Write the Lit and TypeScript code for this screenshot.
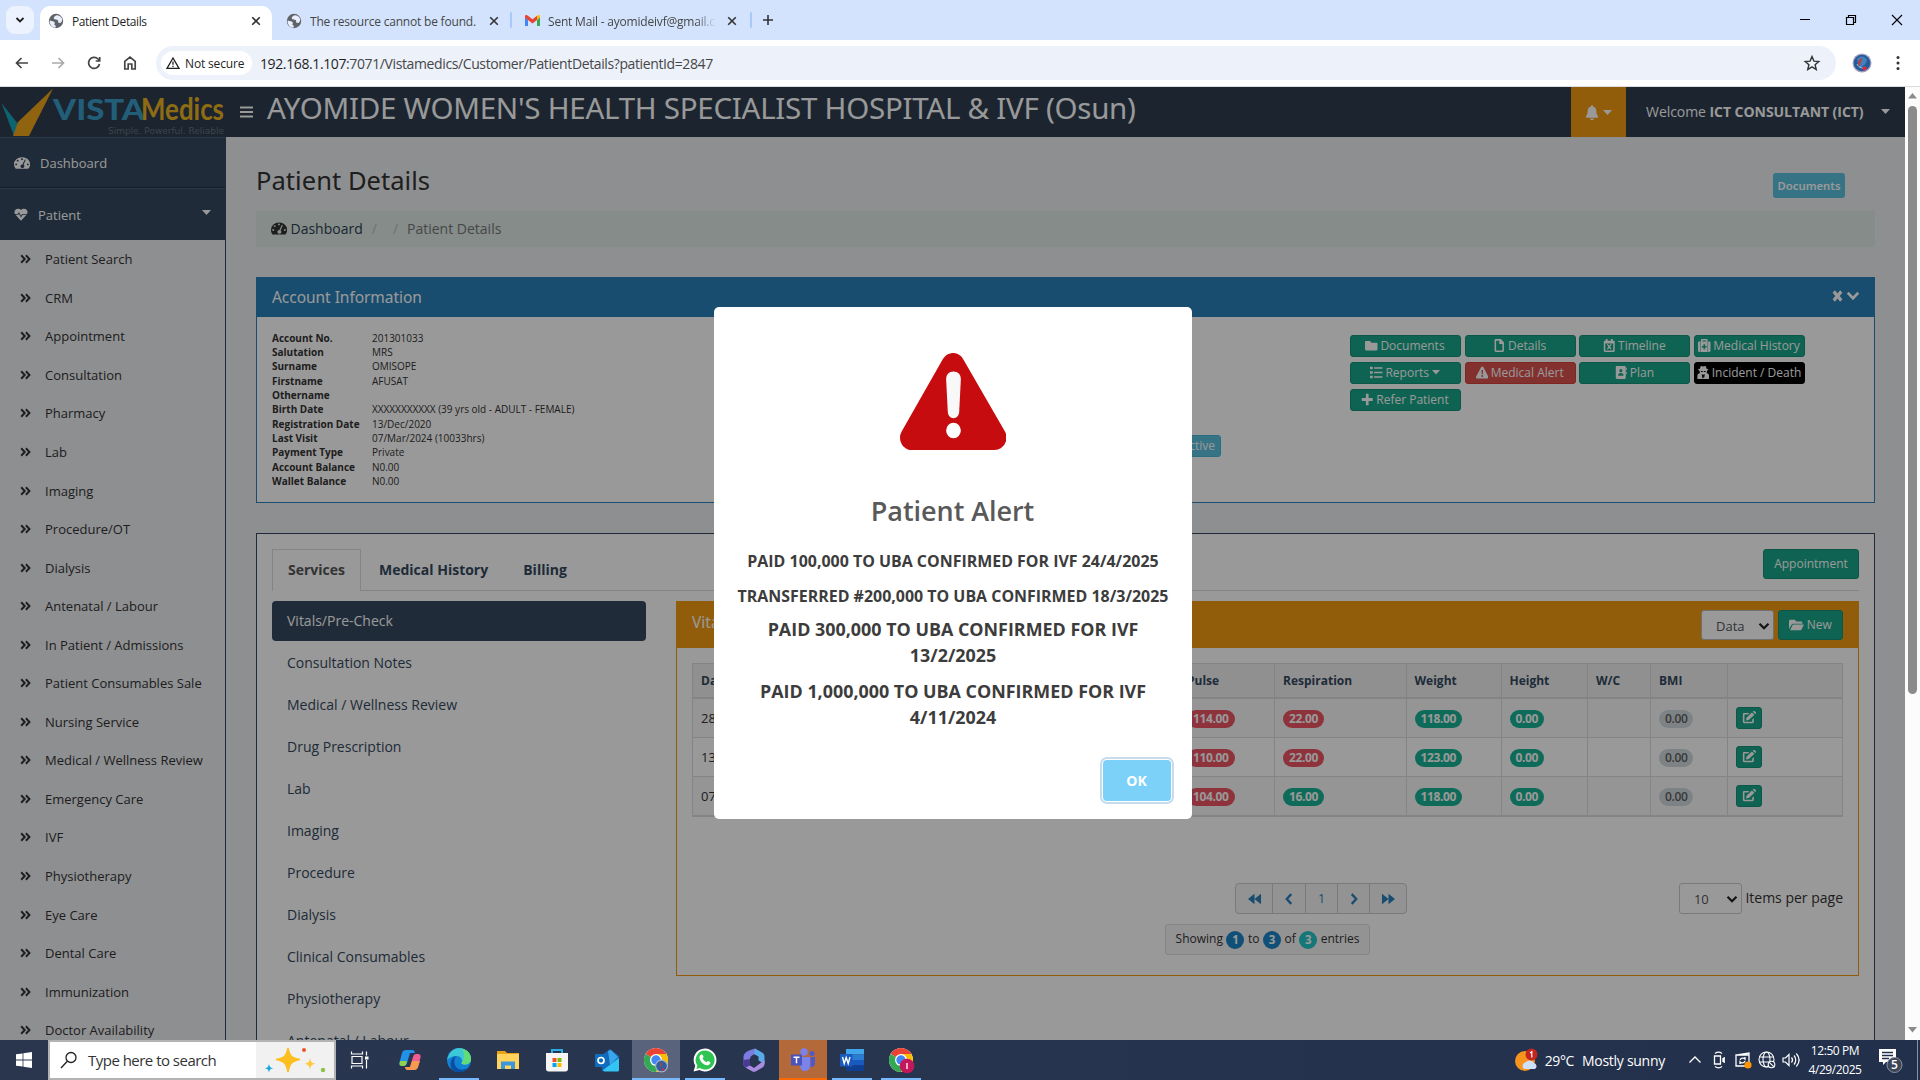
import { LitElement, html, css, svg } from "lit";
import { customElement } from "lit/decorators.js";
import { classMap } from "lit/directives/class-map.js";

const glyph = (body: unknown, w = 16, h = 16, vb = "0 0 16 16", cls = "") =>
  html`<svg class="ic ${cls}" width=${w} height=${h} viewBox=${vb} fill="currentColor" preserveAspectRatio="none">${body}</svg>`;

const dash = svg`<path fill-rule="evenodd" d="M8 1.500a8 8 0 0 0-8 8c0 1.700.5 3.200 1.300 4.500.2.300.4.500.8.500h11.800c.4 0 .6-.2.8-.5A8 8 0 0 0 8 1.500zM8 2.600a1 1 0 1 1 0 2 1 1 0 0 1 0-2zM3.700 4.400a1 1 0 1 1 0 2 1 1 0 0 1 0-2zM2.200 8.600a1 1 0 1 1 0 2 1 1 0 0 1 0-2zM13.800 8.600a1 1 0 1 1 0 2 1 1 0 0 1 0-2zM10.800 4l1 .4-2.200 5.700a2 2 0 1 1-1.200-.4z"/>`;
const heart = svg`<path d="M8 2.500C6.600.5 3.200.3 1.600 2.200.4 3.600.2 5.600 1 7.300h3.400l1.200-2.300L8 9.600l1.300-2.300H15c.8-1.700.6-3.700-.6-5.100C12.800.3 9.400.5 8 2.500z"/><path d="M1.700 8.300 7.400 15c.4.400.8.400 1.200 0l5.700-6.700H10L8 11.800 5.600 7.100 5 8.300z"/>`;
const angles = svg`<path d="M1.500 1.500 6 6l-4.500 4.500M7.500 1.500 12 6l-4.500 4.500" fill="none" stroke="currentColor" stroke-width="2.500"/>`;
const bell = svg`<path d="M8 0a1 1 0 0 0-1 1v.7C4.500 2.100 3 4 3 6.600c0 3-.9 4.100-1.700 5C.7 12.400 1.200 13.500 2 13.500h12c.9 0 1.300-1.100.7-1.900-.8-.9-1.700-2-1.700-5C13 4 11.500 2.100 9 1.700V1a1 1 0 0 0-1-1zM6 14.300h4a2 2 0 0 1-4 0z"/>`;
const caret = svg`<path d="M0 0h16L8 16z"/>`;
const down = svg`<path d="M2 5l6 6 6-6" fill="none" stroke="currentColor" stroke-width="3"/>`;
const cross = svg`<path d="M2.500 2l11 12M13.500 2l-11 12" fill="none" stroke="currentColor" stroke-width="4.500"/>`;
const icons: Record<string, unknown> = {
  folder: svg`<path d="M1.500 2.500h5l1.800 2h6.200c.8 0 1.500.6 1.500 1.400v6.700c0 .8-.7 1.400-1.500 1.400h-13C.7 14 0 13.400 0 12.600V4c0-.8.7-1.500 1.500-1.500z"/>`,
  file: svg`<path fill-rule="evenodd" d="M3.500 0H10l4 4v10.500c0 .8-.7 1.500-1.500 1.500h-9C2.700 16 2 15.300 2 14.500v-13C2 .7 2.700 0 3.500 0zm.5 2v12h8V6H8V2z"/>`,
  cal: svg`<path fill-rule="evenodd" d="M3.500 0h2.300v2h4.400V0h2.300v2h1c.8 0 1.500.7 1.500 1.500v11c0 .8-.7 1.500-1.500 1.500h-11C1.700 16 1 15.300 1 14.500v-11C1 2.700 1.700 2 2.500 2h1zM2.900 5.500v8.600h10.200V5.500zM5 7.200l1-1 2 2 2-2 1 1-2 2.400 2 2.400-1 1-2-2-2 2-1-1 2-2.400z"/>`,
  med: svg`<path fill-rule="evenodd" d="M3.700 3V1.500C3.700.7 4.400 0 5.200 0h5.600c.8 0 1.500.7 1.500 1.500V3v13H3.700zm2 0h4.600V1.900H5.700zM7 6.500v2H5V10.500h2v2h2v-2h2V8.500H9v-2zM0 4.500C0 3.700.7 3 1.500 3h1.600v13H1.500C.7 16 0 15.300 0 14.500zM12.900 3h1.600c.8 0 1.500.7 1.500 1.500v10c0 .8-.7 1.500-1.500 1.500h-1.600z"/>`,
  list: svg`<path d="M0 1h3.500v3H0zM0 6.500h3.500v3H0zM0 12h3.500v3H0zM5.200 1.500H16v2H5.200zM5.200 7H16v2H5.200zM5.200 12.500H16v2H5.200z"/>`,
  warn: svg`<path fill-rule="evenodd" d="M8 .5c.5 0 1 .3 1.300.8l6.500 11.700c.6 1-.1 2.300-1.300 2.300h-13C.3 15.300-.4 14 .2 13L6.700 1.300C7 .8 7.500.5 8 .5zM7 5l.3 5h1.400L9 5zm1 6a1.300 1.300 0 1 0 0 2.600A1.300 1.300 0 0 0 8 11z"/>`,
  book: svg`<path fill-rule="evenodd" d="M2.500 0h9.800c.8 0 1.500.7 1.500 1.500v13c0 .8-.7 1.500-1.500 1.500H2.500C1.700 16 1 15.300 1 14.500v-13C1 .7 1.700 0 2.500 0zm5 3.800a2 2 0 1 0 0 4 2 2 0 0 0 0-4zM4 12h7c0-2-1-3.300-3.500-3.300S4 10 4 12zM14.400 2h1v3h-1zm0 5h1v3h-1z"/>`,
  secret: svg`<path fill-rule="evenodd" d="M5.500 0c.8 0 1.500.5 2.500.5S9.700 0 10.500 0c1 0 1.500 2 1.800 3.500 1.600.3 2.200.6 2.200 1 0 .5-.8.8-1.800 1v1c0 .8-.2 1.500-.5 2l2 .9c.8.400 1.300 1.500 1.300 3V16H.5v-3.600c0-1.500.5-2.600 1.300-3l2-.9c-.3-.5-.5-1.200-.5-2v-1c-1-.2-1.800-.5-1.800-1 0-.4.6-.7 2.200-1C4 2 4.500 0 5.500 0zM5 6v1.300h2.300V6zM8.700 6v1.300H11V6zM6 10l1 5h.6l.4-2.500.4 2.500H9l1-5-2 .8z"/>`,
  plus: svg`<path d="M6.300 1h3.400v5.300H15v3.400H9.700V15H6.300V9.700H1V6.300h5.300z"/>`,
  open: svg`<path d="M1.500 2h4.700l1.600 2h5c.8 0 1.500.6 1.500 1.400V6.500H4.800c-.8 0-1.600.5-2 1.200L0 12.500v-9C0 2.700.7 2 1.500 2zM4.800 7.500H16L13.300 13c-.3.600-.8 1-1.500 1H1.200l2.500-5.700c.2-.5.6-.8 1.100-.8z"/>`,
  edit: svg`<path d="M11.300 1.800l2.900 2.900-6.400 6.400-3.200.5.500-3.300zM12.200.9l.7-.6c.5-.5 1.200-.4 1.700 0l1.200 1.200c.4.500.5 1.200 0 1.700l-.7.600z"/><path d="M8.500 2.500h-6C1.700 2.500 1 3.200 1 4v9.500c0 .8.700 1.500 1.500 1.500H12c.8 0 1.500-.7 1.500-1.500V9l-1.800 1.500v2.700H2.800V4.300h4z"/>`,
};

const menu = ["Patient Search", "CRM", "Appointment", "Consultation", "Pharmacy", "Lab", "Imaging", "Procedure/OT", "Dialysis",
  "Antenatal / Labour", "In Patient / Admissions", "Patient Consumables Sale", "Nursing Service", "Medical / Wellness Review",
  "Emergency Care", "IVF", "Physiotherapy", "Eye Care", "Dental Care", "Immunization", "Doctor Availability"];
const info = [["Account No.", "201301033"], ["Salutation", "MRS"], ["Surname", "OMISOPE"], ["Firstname", "AFUSAT"], ["Othername", ""],
  ["Birth Date", "XXXXXXXXXXX (39 yrs old - ADULT - FEMALE)"], ["Registration Date", "13/Dec/2020"], ["Last Visit", "07/Mar/2024 (10033hrs)"],
  ["Payment Type", "Private"], ["Account Balance", "N0.00"], ["Wallet Balance", "N0.00"]];
const actions: [string, string, string][] = [["folder", "Documents", ""], ["file", "Details", ""], ["cal", "Timeline", ""], ["med", "Medical History", ""],
  ["list", "Reports", "drop"], ["warn", "Medical Alert", "danger"], ["book", "Plan", ""], ["secret", "Incident / Death", "black"], ["plus", "Refer Patient", ""]];
const services = ["Vitals/Pre-Check", "Consultation Notes", "Medical / Wellness Review", "Drug Prescription", "Lab", "Imaging", "Procedure",
  "Dialysis", "Clinical Consumables", "Physiotherapy", "Antenatal / Labour"];
const heads = ["Date", "Pulse", "Respiration", "Weight", "Height", "W/C", "BMI", ""];
const vitals = [
  { d: "28", p: "114.00", r: "22.00", rc: "red", w: "118.00" },
  { d: "13", p: "110.00", r: "22.00", rc: "red", w: "123.00" },
  { d: "07", p: "104.00", r: "16.00", rc: "green", w: "118.00" },
];

const globe = html`<svg width="16" height="16" viewBox="0 0 16 16"><circle cx="8" cy="8" r="7.200" fill="#5f6368"/><path d="M1.800 7.500 5.500 8.500c1 .3 1.500 1 1.200 2l-.4 1.200 1.500 1-.3 2A6.800 6.800 0 0 1 1.500 9z" fill="#e8eefb"/><path d="M9 2.200c-1.500.3-3 1.300-3.300 2.600-.1 1.500 1.800 1.700 3.300 2 1.300.3 1.500 1.500 1 2.700l2.500.5c1-.9 1.700-2 1.700-3.500-.2-2-2-4-5.200-4.300z" fill="#e8eefb"/></svg>`;
const tabX = html`<svg width="16" height="16" viewBox="0 0 16 16"><path d="M4.200 4.200l7.600 7.600M11.800 4.200l-7.600 7.600" stroke="#333" stroke-width="1.600" fill="none"/></svg>`;

@customElement("browser-chrome")
export class BrowserChrome extends LitElement {
  static styles = css`
    :host { display: block; height: 87px; background: #fff; font-family: "Open Sans", sans-serif; color: #1f1f1f; }
    svg { display: block; flex: none; }
    .strip { height: 40px; background: #d3e3fd; display: flex; align-items: flex-end; }
    .pick { width: 28px; height: 28px; border-radius: 9px; background: #edf3fe; margin: 0 6px; display: grid; place-items: center; align-self: center; }
    .tab { height: 34px; width: 232px; box-sizing: border-box; display: flex; align-items: center; padding: 0 8px; gap: 8px; font-size: 12px; letter-spacing: -0.42px; white-space: nowrap; padding-bottom: 4px; }
    .tab.on { background: #fff; border-radius: 10px 10px 0 0; }
    .tab.b { width: 238px; padding-left: 14px; padding-right: 8px; }
    .tab.c { width: 238px; padding-left: 13px; padding-right: 10px; }
    .t { flex: 1; overflow: hidden; }
    .dim { color: #454746; letter-spacing: -0.2px; }
    .fade { mask-image: linear-gradient(90deg, #000 88%, transparent); }
    .sep { width: 2px; height: 16px; background: #a8c7fa; margin-bottom: 12px; border-radius: 1px; }
    .plus { margin: 0 8px 12px; }
    .win { margin-left: auto; display: flex; align-self: center; gap: 30px; padding-right: 15px; }
    .bar { height: 46px; border-bottom: 1px solid #dadce0; display: flex; align-items: center; padding-left: 12px; }
    .nav { display: flex; gap: 16px; width: 144px; }
    .omni { flex: 1; height: 34px; border-radius: 17px; background: #ecf1fa; display: flex; align-items: center; padding: 0 15px 0 5px; }
    .chip { height: 24px; width: 91px; border-radius: 12px; background: #fff; display: flex; align-items: center; gap: 5px; padding-left: 5px; box-sizing: border-box; font-size: 12px; font-weight: 500; letter-spacing: -0.15px; white-space: nowrap; }
    .url { margin-left: 8px; flex: 1; font-size: 14px; letter-spacing: -0.385px; color: #474747; }
    .url b { font-weight: 400; color: #1f1f1f; }
    .end { width: 84px; display: flex; align-items: center; gap: 18px; padding-left: 16px; box-sizing: border-box; }
  `;
  render() {
    return html`
      <div class="strip">
        <div class="pick"><svg width="12" height="12" viewBox="0 0 12 12"><path d="M2.500 4l3.500 3.500L9.500 4" fill="none" stroke="#1f1f1f" stroke-width="1.800"/></svg></div>
        <div class="tab on">${globe}<span class="t">Patient Details</span>${tabX}</div>
        <div class="tab b dim">${globe}<span class="t">The resource cannot be found.</span>${tabX}</div>
        <div class="sep"></div>
        <div class="tab c dim">
          <svg width="15" height="12" viewBox="0 0 15 12"><path d="M0 1.500V11h3V5z" fill="#4285f4"/><path d="M15 1.500V11h-3V5z" fill="#34a853"/><path d="M12 5l3-2.500V1.500C15 0 13.500-.4 12 .8z" fill="#fbbc04"/><path d="M3 5 0 2.700V1.500C0 0 1.500-.4 3 .8l4.500 3.500L12 .8V5L7.500 8.500z" fill="#ea4335"/></svg>
          <span class="t fade">Sent Mail - ayomideivf@gmail.com</span>${tabX}</div>
        <div class="sep"></div>
        <svg class="plus" width="16" height="16" viewBox="0 0 16 16"><path d="M8 3v10M3 8h10" stroke="#333" stroke-width="1.600"/></svg>
        <div class="win">
          <svg width="16" height="16" viewBox="0 0 16 16"><path d="M3 7.500h10" stroke="#000"/></svg>
          <svg width="16" height="16" viewBox="0 0 16 16" fill="none" stroke="#000" stroke-width="1.200"><path d="M3.500 5.500h7v7h-7zM5.500 5.500v-2h7v7h-2"/></svg>
          <svg width="16" height="16" viewBox="0 0 16 16"><path d="M3 3l10 10M13 3 3 13" stroke="#000" stroke-width="1.100"/></svg>
        </div>
      </div>
      <div class="bar">
        <div class="nav">
          <svg width="20" height="20" viewBox="0 0 20 20" fill="none" stroke="#444" stroke-width="1.700"><path d="M16 10H4.500M9.500 5l-5 5 5 5"/></svg>
          <svg width="20" height="20" viewBox="0 0 20 20" fill="none" stroke="#aaa" stroke-width="1.700"><path d="M4 10h11.500M10.500 5l5 5-5 5"/></svg>
          <svg width="20" height="20" viewBox="0 0 20 20" fill="none" stroke="#444" stroke-width="1.700"><path d="M15.500 11A5.500 5.500 0 1 1 14 6l1.500 1.500M15.700 4v4h-4"/></svg>
          <svg width="20" height="20" viewBox="0 0 20 20" fill="none" stroke="#444" stroke-width="1.700"><path d="M4.800 16V8.300L10 4.200l5.200 4.100V16h-3.400v-5H8.200v5z"/></svg>
        </div>
        <div class="omni">
          <div class="chip"><svg width="14" height="14" viewBox="0 0 14 14"><path d="M7 2 1 12.300h12zM7 5.500v3.200M7 9.800v1.300" fill="none" stroke="#1f1f1f" stroke-width="1.300"/></svg>Not secure</div>
          <span class="url"><b>192.168.1.107</b>:7071/Vistamedics/Customer/PatientDetails?patientId=2847</span>
          <svg width="18" height="18" viewBox="0 0 18 18"><path d="M9 2.500l1.900 4.600 4.900.4-3.700 3.200 1.100 4.800L9 12.900l-4.200 2.600 1.100-4.800-3.700-3.200 4.900-.4z" fill="none" stroke="#333" stroke-width="1.400"/></svg>
        </div>
        <div class="end">
          <svg width="20" height="20" viewBox="0 0 20 20"><circle cx="10" cy="10" r="9.500" fill="#a7a0bf"/><circle cx="10" cy="10" r="8.300" fill="#245a9a"/><path d="M5 6c3-4 8-3 10 1-1 4-4 7-8 8z" fill="#4480bb"/><path d="M8.500 5c-3 3-3 6-1 9l2.500-8z" fill="#b34148"/><path d="M5 11c2 4 6 5 9 3" stroke="#9cc4e6" fill="none"/><circle cx="12.500" cy="15.500" r="2" fill="#e3263a"/></svg>
          <svg width="20" height="20" viewBox="0 0 20 20" fill="#333"><circle cx="8" cy="4.500" r="1.500"/><circle cx="8" cy="10" r="1.500"/><circle cx="8" cy="15.500" r="1.500"/></svg>
        </div>
      </div>`;
  }
}

const chrome = svg`<circle cx="12" cy="12" r="12" fill="#fff"/><path d="M12 12 1.600 6A12 12 0 0 1 22.400 6H12z" fill="#ea4335"/><path d="M12 12 1.600 6A12 12 0 0 0 12 24l5.200-9z" fill="#34a853"/><path d="M12 6h10.400A12 12 0 0 1 12 24l5.200-9z" fill="#fbbc04"/><circle cx="12" cy="12" r="6" fill="#fff"/><circle cx="12" cy="12" r="4.700" fill="#4285f4"/>`;
const apps: { c: string; i: unknown }[] = [
  { c: "first", i: svg`<path d="M4 8.500h10v7H4zM3.500 3.500V6h11V3.500M3.500 20.500V18h11v2.500M18.500 3.500v4M18.500 12v8.500" fill="none" stroke="#fff" stroke-width="1.200"/><path d="M17 8.500h3.500v3H17z" fill="#fff"/>` },
  { c: "", i: svg`<path d="M8 2h6c2 0 2.500 1 3 3H12L9 15c-.5 2-1.500 3-3 3H4c-2 0-3-1-2.500-3.500L4 5c.6-2 2-3 4-3z" fill="#2292e8"/><path d="M2 13h7l-.4 2c-.5 2-1.500 3-3 3H4c-2 0-2.700-1-2.400-3z" fill="#8ed34d"/><path d="M16 22h-6c-2 0-2.500-1-3-3h5l3-10c.5-2 1.500-3 3-3h2c2 0 3 1 2.500 3.500L20 19c-.6 2-2 3-4 3z" fill="#ee5d93"/><path d="M10 22c-2 0-2.500-1-3-3h5l2-6h8l-2 6c-.6 2-2 3-4 3z" fill="#f79a4d"/>` },
  { c: "run", i: svg`<circle cx="12" cy="12" r="12" fill="#1382d4"/><path d="M1 9C3 3 8 0 12 0c7 0 12 5 12 11 0 4-3 5.500-6 5.500-2 0-4-.8-3.500-1.800C16 13 15 8 9.500 8 5 8 1.500 10 0 12z" fill="#3dc8d8"/><path d="M15 .4C21 2 24 6 24 11c0 4-3 5.500-6 5.500-2 0-4-.8-3.500-1.800C18 11 18 5 15 .4z" fill="#62dc78"/><path d="M9.500 8C7 10 6 16 10 20c3 2.500 8 2 11.500-.5C18 24 12 25.500 7 23 2 20 2 10 9.500 8z" fill="#0a4f9f"/>` },
  { c: "", i: svg`<path d="M1 3h8l2 2h12v15H1z" fill="#e8a317"/><path d="M1 6h22v15H1z" fill="#ffd35c"/><path d="M5 13.500h14V21h-4v-3.500H9V21H5z" fill="#3b97dc"/>` },
  { c: "", i: svg`<path d="M7 6V2h10v4" fill="none" stroke="#27aee6" stroke-width="2"/><path d="M1 5h22v16c0 1.500-1 2.500-2.500 2.500h-17C2 23.500 1 22.500 1 21z" fill="#f5f5f5"/><path d="M7.500 10h4v4h-4z" fill="#f25022"/><path d="M12.500 10h4v4h-4z" fill="#7fba00"/><path d="M7.500 15h4v4h-4z" fill="#00a4ef"/><path d="M12.500 15h4v4h-4z" fill="#ffb900"/>` },
  { c: "", i: svg`<g transform="translate(1 0)"><path d="M6 8 15 1l9 7v13l-2 2H7z" fill="#1466b8"/><path d="M13 3l3-1 7 7-8 8z" fill="#3aa5ea"/><path d="M8 22l16-12v12c0 1-.6 1.500-1.500 1.500H9z" fill="#33c5f3"/><path d="M0 6h12v13H0z" fill="#0f6cbd"/><circle cx="6" cy="12.500" r="3" fill="none" stroke="#fff" stroke-width="1.700"/></g>` },
  { c: "act run", i: svg`${chrome}<circle cx="17.500" cy="18" r="6.500" fill="#a6b3cc"/><circle cx="17.500" cy="18" r="5.300" fill="#315f9d"/><path d="M16 14.500l2 1-2 5z" fill="#b34148"/><circle cx="19" cy="21.500" r="1.300" fill="#e3263a"/>` },
  { c: "run", i: svg`<path d="M12 .5a11.500 11.500 0 1 1-5.500 21.600L.6 23.500l1.600-5.700A11.500 11.500 0 0 1 12 .5z" fill="#fff"/><path d="M12 2.500a9.500 9.500 0 1 1-5 17.500l-3.600 1 1-3.500A9.500 9.500 0 0 1 12 2.500z" fill="#2fc351"/><path d="M8.300 6.500c.8-.3 1.300 0 1.500.6l.8 1.900-1 1.500c.9 1.800 2.200 3 4 3.700l1.300-1.300 2.500 1.200c.3 2-1.500 3.300-3.200 3.200C10 17 6.600 12.500 6.400 9.500c0-1.200.8-2.500 1.900-3z" fill="#fff"/>` },
  { c: "", i: svg`<path d="M13 .5 7 2.500C3.500 4 1.500 6 1.500 9v7c0 1.500.8 2.700 2 3.300l4.500 2.500 0-11c0-2 1.500-3.300 5-4.800z" fill="#7d7be0"/><path d="M13 .5l7.500 4.300c1.300.8 2 2 2 3.500V16l-6-3.500V8.500L12 6z" fill="#5aa9ea"/><path d="M22.500 12v4c0 1.500-.7 2.700-2 3.500L14 23.300c-1.300.7-2.700.7-4 0l-6.500-3.800 4.500-2 4 2.500z" fill="#a98be0"/><path d="M8 11v6.500l-4.500 2C2.300 18.500 1.500 17.500 1.500 16v-4z" fill="#4a3b95"/>` },
  { c: "teams", i: svg`<circle cx="13" cy="4" r="3.700" fill="#7b83eb"/><circle cx="21" cy="5.500" r="2.500" fill="#5059c9"/><path d="M9 9h10v8c0 4-2 6-5 6s-5-2-5-6z" fill="#7b83eb"/><path d="M19.500 9H24v6c0 3-2 4.500-4.500 4z" fill="#5059c9"/><path d="M0 6.500h11v11H0z" fill="#4b53bc"/><path d="M2.500 9.300h6M5.500 9.300v6" stroke="#fff" stroke-width="1.500"/>` },
  { c: "run word", i: svg`<path d="M6 1h18v5.500H6z" fill="#41a5ee"/><path d="M6 6.500h18V12H6z" fill="#2b7cd3"/><path d="M6 12h18v5.500H6z" fill="#185abd"/><path d="M6 17.500h18V23H6z" fill="#103f91"/><path d="M0 6h12.500v12.500H0z" fill="#185abd"/><path d="M2.500 9l1.700 6.500 2-6 2 6L10 9" fill="none" stroke="#fff" stroke-width="1.400"/>` },
  { c: "run", i: svg`${chrome}<circle cx="18" cy="18" r="7.300" fill="#c2185b"/><path d="M18 15v6" stroke="#fff" stroke-width="1.300"/>` },
];

@customElement("task-bar")
export class TaskBar extends LitElement {
  static styles = css`
    :host { display: flex; height: 40px; background: linear-gradient(90deg, #2a364e, #28354f 40%, #22304c); font-family: "Open Sans", sans-serif; color: #fff; font-size: 14px; }
    svg { display: block; flex: none; overflow: visible; }
    .start { width: 48px; display: grid; place-items: center; padding-right: 0; }
    .search { width: 288px; box-sizing: border-box; border: 2px solid #b3b3b3; background: #fff; color: #333; display: flex; align-items: center; font-size: 15px; letter-spacing: -0.52px; }
    .mag { margin: 0 10px 0 10px; }
    .q { flex: 1; white-space: nowrap; }
    .spark { width: 78px; height: 100%; background: #f1f1f1; }
    .apps { display: flex; }
    .app { width: 48px; height: 40px; margin-right: 1.100px; display: grid; place-items: center; position: relative; box-sizing: border-box; padding-bottom: 1px; }
    .app.first { width: 49px; padding-right: 1px; }
    .app.act { background: #59647c; }
    .app.teams { background: #b3693a; box-shadow: inset 0 -2px #ff6a00; }
    .app.run::after { content: ""; position: absolute; left: 4px; right: 4px; bottom: 0; height: 2px; background: #76b9ff; }
    .app.act::after { left: 0; right: 0; }
    .tray { margin-left: auto; display: flex; align-items: center; }
    .temp { margin: 0 8px 0 6px; letter-spacing: -0.4px; }
    .wx { letter-spacing: -0.28px; width: 101px; white-space: nowrap; }
    .ti { width: 24px; display: grid; place-items: center; }
    .clock { width: 62px; text-align: center; font-size: 12px; line-height: 19px; letter-spacing: -0.42px; margin-right: 13px; margin-left: 1px; padding-bottom: 1px; }
    .note { padding-right: 14px; border-right: 1px solid #8a92a2; margin-right: 2px; height: 40px; display: grid; place-items: center; }
  `;
  render() {
    return html`
      <div class="start"><svg width="16" height="16" viewBox="0 0 16 16" fill="#fff"><path d="M0 2.300 6.600 1.400v6.200H0zM7.400 1.300 16 0v7.600H7.400zM0 8.400h6.600v6.200L0 13.700zM7.400 8.400H16V16l-8.600-1.300z"/></svg></div>
      <div class="search">
        <svg class="mag" width="18" height="18" viewBox="0 0 18 18"><circle cx="11" cy="6.500" r="5" fill="none" stroke="#222" stroke-width="1.300"/><path d="M7.300 10.200 1 17" stroke="#222" stroke-width="1.300"/></svg>
        <span class="q">Type here to search</span>
        <svg class="spark" viewBox="0 0 78 36"><path d="M32 6c1.500 8 3.500 10 12 11.500-8.500 1.500-10.500 4-12 12.500-1.500-8.500-3.500-11-12-12.500C28.500 16 30.500 14 32 6z" fill="#fdbf1e" stroke="#fdbf1e" stroke-width="1.500"/><path d="M54 16c.8 4 1.500 5 5.500 5.800-4 .8-4.700 1.800-5.500 5.700-.8-3.900-1.500-4.900-5.500-5.700 4-.8 4.700-1.800 5.500-5.800z" fill="#ffc83d"/><path d="M13 22c.8 3 1.200 3.600 4.300 4.300-3.100.7-3.500 1.300-4.300 4.300-.8-3-1.200-3.600-4.300-4.300 3.100-.7 3.500-1.300 4.300-4.300z" fill="#19a8e0"/><circle cx="48" cy="8" r="2" fill="#e8562a"/><circle cx="67" cy="28" r="2.200" fill="#8bc34a"/></svg>
      </div>
      <div class="apps">${apps.map((a) => html`<div class="app ${a.c}"><svg width="24" height="24" viewBox="0 0 24 24">${a.i}</svg></div>`)}</div>
      <div class="tray">
        <svg width="24" height="24" viewBox="0 0 24 24"><circle cx="10" cy="13" r="10" fill="#f7941e"/><path d="M9 21a4 4 0 0 1 2-7 5 5 0 0 1 8 1 3.300 3.300 0 0 1 1 6z" fill="#cfe0fa"/><circle cx="16.500" cy="6.500" r="6" fill="#c4261d"/><path d="M15 5l1.800-1.300V9.500" fill="none" stroke="#fff" stroke-width="1.200"/></svg>
        <span class="temp">29°C</span><span class="wx">Mostly sunny</span>
        <div class="ti"><svg width="14" height="14" viewBox="0 0 14 14"><path d="M1.500 9.500 7 4l5.500 5.500" fill="none" stroke="#fff" stroke-width="1.300"/></svg></div>
        <div class="ti"><svg width="16" height="18" viewBox="0 0 16 18" fill="none" stroke="#fff" stroke-width="1.300"><path d="M4 2.500C6 1 9 1 11 2.500M4 15.500c2 1.500 5 1.500 7 0M3.500 5h6v8h-6zM12 7v4M13.200 6v6"/></svg></div>
        <div class="ti"><svg width="18" height="18" viewBox="0 0 18 18" fill="none" stroke="#fff" stroke-width="1.300"><path d="M2 4h13v11H2zM3 4l12-2v3M6 9a3 3 0 0 1 5-1V6M11 10a3 3 0 0 1-5 1v2"/><circle cx="14" cy="14" r="3.600" fill="#ff9500" stroke="none"/></svg></div>
        <div class="ti"><svg width="18" height="18" viewBox="0 0 18 18" fill="none" stroke="#fff" stroke-width="1.100"><circle cx="8.500" cy="8.500" r="7.500"/><ellipse cx="8.500" cy="8.500" rx="3.500" ry="7.500"/><path d="M1 6h15M1 11h15"/><circle cx="13.500" cy="13.500" r="3.300" fill="#22304c"/><path d="M11.300 11.300l4.400 4.400"/></svg></div>
        <div class="ti"><svg width="18" height="16" viewBox="0 0 18 16" fill="none" stroke="#fff" stroke-width="1.200"><path d="M1 6h2.500L7 2.500v11L3.500 10H1zM9.500 5.500c1.300 1.500 1.300 3.500 0 5M12 3.500c2.300 2.500 2.300 6.500 0 9M14.300 1.500c3.500 4 3.500 9 0 13"/></svg></div>
        <div class="clock">12:50 PM<br />4/29/2025</div>
        <div class="note"><svg width="24" height="24" viewBox="0 0 24 24"><path d="M0 1h17v13H7l-3 3v-3H0z" fill="#fff"/><path d="M3 4.500h11M3 7.500h11M3 10.500h7" stroke="#22304c" stroke-width="1.300"/><circle cx="15.500" cy="17" r="7.500" fill="#3b4557" stroke="#8a92a2"/><text x="15.500" y="21.200" font-size="12" font-weight="600" text-anchor="middle" fill="#fff" font-family="Open Sans">5</text></svg></div>
      </div>`;
  }
}

@customElement("app-root")
export class AppRoot extends LitElement {
  static styles = css`
    :host { display: flex; flex-direction: column; width: 1920px; height: 1080px; overflow: hidden; font-family: "Open Sans", sans-serif; color: #333; font-size: 14px; }
    svg { display: block; flex: none; }
    .view { height: 953px; display: flex; }
    .page { position: relative; width: 1905px; height: 953px; overflow: hidden; background: #edeef2; }
    .rail { width: 15px; background: #fcfcfc; display: flex; flex-direction: column; align-items: center; color: #8b8b8b; }
    .rail .up { margin-top: 6px; }
    .thumb { width: 9px; height: 588px; border-radius: 5px; background: #8b8b8b; margin-top: 7px; }
    .rail .dn { margin: auto 0 7px; }
    .uf { font-family: "Noto Sans", "Open Sans", sans-serif; }

    .top { height: 50px; background: #2d3d4f; display: flex; color: #fff; }
    .brand { width: 240px; }
    .burger { margin-top: 19px; width: 14px; }
    .hosp { margin-left: 13px; flex: 1; font-size: 29.500px; line-height: 42px; letter-spacing: -0.26px; white-space: nowrap; }
    .bell { width: 55px; background: #f39c12; display: flex; align-items: center; justify-content: center; gap: 4px; }
    .who { width: 279px; box-sizing: border-box; padding: 0 15px 1px 20px; display: flex; align-items: center; justify-content: space-between; letter-spacing: -0.05px; white-space: nowrap; }

    .main { display: flex; height: 903px; }
    .side { width: 225px; border-right: 1px solid #34495e; }
    .grp { background: #34495e; color: #fff; font-size: 13px; height: 51px; box-sizing: border-box; border-top: 1px solid #4a6078; border-bottom: 1px solid #1f2f40; display: flex; align-items: center; padding: 0 14px; gap: 10px; }
    .grp.pt { height: 52px; border-bottom: 0; }
    .grp.pt span { margin-bottom: -1px; }
    .grp .ic:last-child { margin-left: auto; margin-bottom: 4px; }
    .item { height: 38.550px; display: flex; align-items: center; padding-left: 20px; gap: 14px; font-size: 13px; color: #333; white-space: nowrap; }

    .body { flex: 1; padding: 0 30px; }
    .head { height: 74px; display: flex; justify-content: space-between; align-items: center; box-sizing: border-box; padding-top: 12px; }
    h2 { margin: 0; font-weight: 400; font-size: 25.500px; letter-spacing: 0.050px; padding-bottom: 1px; }
    .docs { margin: 10px 30px 0 0; background: #5bc0de; color: #fff; font-size: 11.300px; font-weight: 600; width: 72px; height: 25px; border-radius: 3px; display: grid; place-items: center; }
    .crumb { height: 36px; box-sizing: border-box; background: #dee9e6; display: flex; align-items: center; padding: 0 0 2px 15px; font-size: 14px; }
    .crumb .a { color: #2c3e50; margin: 0 9px 0 3.500px; }
    .crumb i { font-style: normal; color: #bbb; margin-right: 16px; }
    .crumb i + i { margin-right: 9px; }
    .crumb .cur { color: #777; }

    .acct { margin-top: 30px; height: 226px; box-sizing: border-box; border: 1px solid #2980b9; background: #fff; }
    .ah { background: #2980b9; height: 39px; color: #fff; display: flex; align-items: center; padding: 0 14px 0 15px; gap: 3px; }
    .ah .ic { margin-bottom: 4px; }
    .ah .ttl { flex: 1; font-size: 15.500px; letter-spacing: -0.040px; padding-bottom: 1px; }
    .ab { display: flex; padding-left: 15px; }
    .info { width: 800px; padding-top: 13.500px; font-size: 10px; line-height: 14.350px; }
    .row { display: flex; height: 14.350px; }
    .row b { width: 100px; }
    .stat { width: 149px; display: flex; justify-content: flex-end; padding-top: 118px; }
    .tag { background: #5bc0de; border: 1px solid #46b8da; box-sizing: border-box; height: 22px; color: #fff; font-size: 12px; padding: 0 5px; line-height: 19px; border-radius: 3px; }
    .acts { margin: 18px 0 0 129px; display: grid; grid-template-columns: repeat(4, 111px); column-gap: 3.700px; row-gap: 5px; grid-auto-rows: 22px; align-content: start; }
    .btn { background: #18a689; color: #fff; border: 1px solid #149277; box-sizing: border-box; border-radius: 3px; font-size: 12px; display: flex; align-items: center; justify-content: center; gap: 2.500px; white-space: nowrap; padding-bottom: 1px; }
    .acts .btn { padding-right: 1px; }
    .btn.danger { background: #d9534f; border-color: #d43f3a; }
    .btn.black { background: #000; border-color: #000; }

    .svc { margin-top: 30px; height: 600px; border: 1px solid #34495e; background: #fff; padding: 15px; }
    .tabs { height: 41px; border-bottom: 1px solid #ddd; display: flex; font-weight: 700; color: #34495e; }
    .tb { padding: 0 17px 1px 18px; display: flex; align-items: center; font-size: 14px; }
    .tb.on { border: 1px solid #ddd; border-bottom: 0; background: #fff; padding: 0 15px 2px; height: 42px; box-sizing: border-box; color: #555; }
    .apt { margin-left: auto; width: 96px; height: 30px; font-weight: 400; }
    .cols { display: flex; gap: 30px; padding-top: 10px; }
    .pills { width: 374px; color: #34495e; }
    .pill { height: 40px; box-sizing: border-box; margin-bottom: 2px; display: flex; align-items: center; padding: 0 0 2px 15px; border-radius: 4px; }
    .pill.on { background: #34495e; color: #fff; }
    .vit { flex: 1; height: 375px; box-sizing: border-box; border: 1px solid #f39c12; }
    .vh { background: #f39c12; height: 46px; display: flex; align-items: center; color: #fff; padding: 0 15px; gap: 4px; }
    .vh .ttl { flex: 1; font-size: 15.500px; padding-bottom: 6px; }
    .sel { box-sizing: border-box; height: 30px; border: 1px solid #ccc; border-radius: 3px; background: #fff; color: #555; display: flex; align-items: center; justify-content: space-between; font-size: 13px; padding: 0 3px 0 14px; }
    .sel .ic { color: #222; }
    .sel.data { width: 73px; border-color: #bbb; padding-top: 1px; }
    .sel.ten { width: 63px; height: 31px; padding-left: 13.500px; }
    .new { width: 65px; height: 30px; }
    .vb { padding: 15px 15px 0; height: 312px; box-sizing: border-box; }
    .tbl { border: 1px solid #ddd; border-width: 1px 0 2px 1px; }
    .tr { display: grid; grid-template-columns: 486px 96px 131.500px 95px 86.500px 63px 77px 1fr; height: 38px; border-bottom: 1px solid #ddd; font-size: 13px; }
    .tr:last-child { border-bottom: 0; }
    .tr.odd { background: #f9f9f9; }
    .tr.th { height: 33px; border-bottom-width: 2px; background: #f0f0f1; font-weight: 700; font-size: 12px; color: #34495e; }
    .td { border-right: 1px solid #ddd; padding-left: 8px; display: flex; align-items: center; }
    .bd { height: 18px; border-radius: 9px; padding: 0 6px; font-size: 12px; line-height: 17.500px; font-weight: 700; color: #fff; letter-spacing: -0.36px; margin-top: 1px; }
    .red { background: #ed5565; }
    .green { background: #1ab394; }
    .grey { background: #d1dade; color: #5e5e5e; font-weight: 600; }
    .ed { width: 26px; height: 22px; }
    .pg { display: flex; align-items: flex-start; margin-top: 66px; padding-left: 543px; height: 41px; }
    .pager { display: flex; height: 31px; box-sizing: border-box; border: 1px solid #ccc; border-radius: 4px; background: #f5f5f5; color: #2980b9; font-size: 12.500px; }
    .pager div { display: grid; place-items: center; border-right: 1px solid #ccc; box-sizing: border-box; }
    .pager div:last-child { border: 0; }
    .w1 { width: 37px; } .w2 { width: 33px; } .w3 { width: 32px; } .w4 { width: 32px; } .w5 { width: 36px; }
    .per { margin-left: auto; display: flex; align-items: center; gap: 3px; height: 31px; }
    .per span { padding-bottom: 2px; }
    .show { width: 205px; height: 31px; margin: 0 auto; box-sizing: border-box; border: 1px solid #ddd; border-radius: 3px; background: #f5f5f5; display: flex; align-items: center; justify-content: center; font-size: 12px; gap: 3.500px; padding-bottom: 2px; }
    .dot { width: 18px; height: 18px; border-radius: 9px; background: #1c84c6; color: #fff; font-weight: 700; font-size: 11.500px; display: grid; place-items: center; margin-top: 2px; }
    .dot.teal { background: #23c6c8; }

    .shade { position: absolute; inset: 0; background: rgba(0, 0, 0, 0.4); display: flex; justify-content: center; align-items: flex-start; padding-top: 220px; }
    .modal { width: 478px; height: 512px; background: #fff; border-radius: 5px; display: flex; flex-direction: column; align-items: center; box-sizing: border-box; color: #3c3c3c; text-align: center; }
    .alert { margin-top: 46px; }
    .mt { font-size: 27px; font-weight: 600; color: #595959; line-height: 36px; margin-top: 43px; letter-spacing: -0.050px; }
    .ln { font-weight: 700; white-space: nowrap; padding-left: 1px; }
    .s1 { font-size: 15.950px; line-height: 21px; margin-top: 14px; }
    .s1.first { margin-top: 21.500px; }
    .s2 { font-size: 17.900px; line-height: 25.900px; margin-top: 10.500px; }
    .ok { align-self: flex-end; margin: auto 21px 18px 0; width: 68px; height: 41px; border-radius: 4px; background: #7cd1f9; color: #fff; font-weight: 700; font-size: 14px; display: grid; place-items: center; box-shadow: 0 0 0 1px #fff, 0 0 0 3px #c6dcec; }
  `;

  private cellBadge(c: string, v: string) {
    return html`<div class="td"><span class="bd ${c}">${v}</span></div>`;
  }

  render() {
    return html`
      <browser-chrome></browser-chrome>
      <div class="view">
        <div class="page">
          <div class="top">
            <svg class="brand" width="240" height="50" viewBox="0 0 240 50">
              <path d="M1.500 16 18 37l-4 12z" fill="#16a5b8"/><path d="M53 1.500 29 49H13L18 35z" fill="#eea61a"/>
              <text x="53" y="33" font-family="Lato" font-weight="900" font-size="28.500" fill="#3a9dc8" textLength="92" lengthAdjust="spacingAndGlyphs">VISTA</text>
              <text x="141" y="33" font-family="Lato" font-weight="700" font-size="30" fill="#ecb420" textLength="83" lengthAdjust="spacingAndGlyphs">Medics</text>
              <text x="108" y="47" font-family="DejaVu Sans" font-size="8.500" fill="#67727f" textLength="116" lengthAdjust="spacingAndGlyphs">Simple. Powerful. Reliable</text>
            </svg>
            <svg class="burger" width="14" height="12" viewBox="0 0 14 12"><path d="M0 1.500h13M0 6h13M0 10.500h13" stroke="#fff" stroke-width="2.200"/></svg>
            <div class="hosp uf">AYOMIDE WOMEN'S HEALTH SPECIALIST HOSPITAL &amp; IVF (Osun)</div>
            <div class="bell">${glyph(bell, 14, 15)}${glyph(caret, 9, 5)}</div>
            <div class="who"><span>Welcome <b>ICT CONSULTANT (ICT)</b></span>${glyph(caret, 9, 5)}</div>
          </div>
          <div class="main">
            <div class="side">
              <div class="grp d">${glyph(dash, 16, 14)}<span>Dashboard</span></div>
              <div class="grp pt">${glyph(heart, 14, 13)}<span>Patient</span>${glyph(caret, 9, 5)}</div>
              ${menu.map((m) => html`<div class="item">${glyph(angles, 11, 10, "0 0 14 12")}${m}</div>`)}
            </div>
            <div class="body">
              <div class="head"><h2 class="uf">Patient Details</h2><div class="docs uf">Documents</div></div>
              <div class="crumb">${glyph(dash, 16, 15)}<span class="a">Dashboard</span><i>/</i><i>/</i><span class="cur">Patient Details</span></div>
              <div class="acct">
                <div class="ah"><span class="ttl uf">Account Information</span>${glyph(cross, 11, 12)}${glyph(down, 14, 15)}</div>
                <div class="ab">
                  <div class="info">${info.map(([k, v]) => html`<div class="row"><b>${k}</b><span>${v}</span></div>`)}</div>
                  <div class="stat"><span class="tag">Active</span></div>
                  <div class="acts">${actions.map(([i, t, c]) => html`<div class="btn ${c}">${glyph(icons[i], 12.500, 13)}${t}${c === "drop" ? glyph(caret, 8, 4.500) : ""}</div>`)}</div>
                </div>
              </div>
              <div class="svc">
                <div class="tabs">
                  <div class="tb on">Services</div><div class="tb">Medical History</div><div class="tb">Billing</div>
                  <div class="btn apt">Appointment</div>
                </div>
                <div class="cols">
                  <div class="pills">${services.map((s, n) => html`<div class=${classMap({ pill: true, on: n === 0 })}>${s}</div>`)}</div>
                  <div class="vit">
                    <div class="vh"><span class="ttl uf">Vitals</span>
                      <div class="sel data">Data${glyph(down, 12, 12)}</div>
                      <div class="btn new">${glyph(icons.open, 15, 14)}New</div></div>
                    <div class="vb">
                      <div class="tbl">
                        <div class="tr th">${heads.map((h) => html`<div class="td">${h}</div>`)}</div>
                        ${vitals.map((v, n) => html`<div class=${classMap({ tr: true, odd: n % 2 === 0 })}>
                          <div class="td">${v.d}</div>${this.cellBadge("red", v.p)}${this.cellBadge(v.rc, v.r)}${this.cellBadge("green", v.w)}
                          ${this.cellBadge("green", "0.00")}<div class="td"></div>${this.cellBadge("grey", "0.00")}
                          <div class="td"><div class="btn ed">${glyph(icons.edit, 14, 13)}</div></div></div>`)}
                      </div>
                      <div class="pg">
                        <div class="pager">
                          <div class="w1">${glyph(svg`<path d="M8 1v14L0 8zM16 1v14L8 8z"/>`, 13, 12)}</div>
                          <div class="w2">${glyph(svg`<path d="M11 1.500 5 8l6 6.500" fill="none" stroke="currentColor" stroke-width="3"/>`, 12, 12)}</div>
                          <div class="w3">1</div>
                          <div class="w4">${glyph(svg`<path d="M5 1.500 11 8l-6 6.500" fill="none" stroke="currentColor" stroke-width="3"/>`, 12, 12)}</div>
                          <div class="w5">${glyph(svg`<path d="M0 1v14l8-7zM8 1v14l8-7z"/>`, 13, 12)}</div>
                        </div>
                        <div class="per"><div class="sel ten">10${glyph(down, 12, 12)}</div><span>Items per page</span></div>
                      </div>
                      <div class="show">Showing <span class="dot">1</span> to <span class="dot">3</span> of <span class="dot teal">3</span> entries</div>
                    </div>
                  </div>
                </div>
              </div>
            </div>
          </div>
          <div class="shade">
            <div class="modal">
              <svg class="alert" width="106" height="97" viewBox="0 2 108 94.500" preserveAspectRatio="none"><path d="M54 14 96.500 84.500H12z" fill="#c60c0f" stroke="#c60c0f" stroke-width="24" stroke-linejoin="round"/><path d="M54.500 20c4.500 0 7.500 3 7.500 7.500l-1.700 32c-.3 3.800-2.800 6-5.800 6s-5.500-2.200-5.800-6L47 27.500c0-4.500 3-7.500 7.500-7.500z" fill="#f8f8f8"/><circle cx="54.500" cy="77.500" r="7.500" fill="#fff"/></svg>
              <div class="mt">Patient Alert</div>
              <div class="ln s1 first">PAID 100,000 TO UBA CONFIRMED FOR IVF 24/4/2025</div>
              <div class="ln s1">TRANSFERRED #200,000 TO UBA CONFIRMED 18/3/2025</div>
              <div class="ln s2">PAID 300,000 TO UBA CONFIRMED FOR IVF<br />13/2/2025</div>
              <div class="ln s2">PAID 1,000,000 TO UBA CONFIRMED FOR IVF<br />4/11/2024</div>
              <div class="ok">OK</div>
            </div>
          </div>
        </div>
        <div class="rail">
          <svg class="up" width="9" height="6" viewBox="0 0 9 6"><path d="M4.500 0 9 5.500H0z" fill="#8b8b8b"/></svg>
          <div class="thumb"></div>
          <svg class="dn" width="9" height="6" viewBox="0 0 9 6"><path d="M0 0h9L4.500 5.500z" fill="#8b8b8b"/></svg>
        </div>
      </div>
      <task-bar></task-bar>`;
  }
}
